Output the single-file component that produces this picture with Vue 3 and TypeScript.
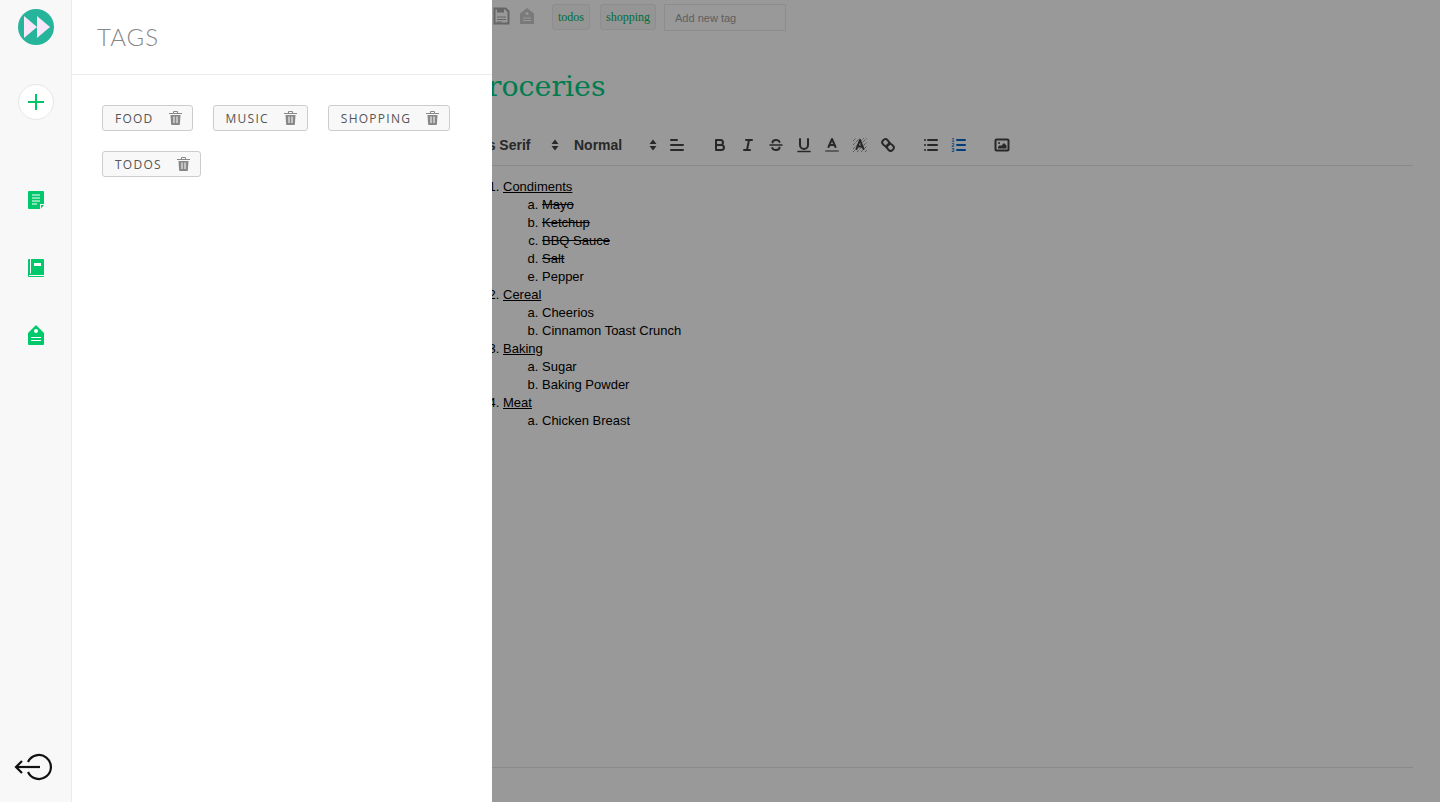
<script setup lang="ts">
interface Tag {
  name: string;
}

interface Item {
  text: string;
  done?: boolean;
}

interface Section {
  title: string;
  items: Item[];
}

const tags: Tag[] = [
  { name: 'Food' },
  { name: 'Music' },
  { name: 'Shopping' },
  { name: 'Todos' },
];

const sections: Section[] = [
  {
    title: 'Condiments',
    items: [
      { text: 'Mayo', done: true },
      { text: 'Ketchup', done: true },
      { text: 'BBQ Sauce', done: true },
      { text: 'Salt', done: true },
      { text: 'Pepper' },
    ],
  },
  {
    title: 'Cereal',
    items: [{ text: 'Cheerios' }, { text: 'Cinnamon Toast Crunch' }],
  },
  {
    title: 'Baking',
    items: [{ text: 'Sugar' }, { text: 'Baking Powder' }],
  },
  {
    title: 'Meat',
    items: [{ text: 'Chicken Breast' }],
  },
];
</script>

<template>
  <div class="page">
    <main class="editor">
      <div class="note-bar">
        <svg class="note-icon" viewBox="0 0 17 18">
          <path d="M1.500 1.500h11l3 3v12h-14z" fill="#fff" stroke="#aaa" stroke-width="2" />
          <rect x="4" y="1" width="7" height="4.500" fill="#aaa" />
          <path d="M4 10h9M4 12.500h9M4 15h5" stroke="#aaa" stroke-width="1" />
        </svg>
        <svg class="note-icon note-icon--tag" viewBox="0 0 14 18">
          <path d="M0 6.500L7 1l7 5.500V17H0z" fill="#ccc" />
          <circle cx="7" cy="6.500" r="1.500" fill="#fff" />
          <path d="M3 11h8M3 13.500h8" stroke="#fff" stroke-width="1" />
        </svg>
        <span class="note-tag">todos</span>
        <span class="note-tag">shopping</span>
        <input class="note-input" type="text" placeholder="Add new tag" />
      </div>

      <h1 class="note-title">Groceries</h1>

      <div class="toolbar">
        <div class="picker picker--font">
          Sans Serif
          <svg class="arrows" viewBox="0 0 8 12"><path d="M4 0.500l3.500 4.500H.5zM4 11.500L.5 7h7z" /></svg>
        </div>
        <div class="picker picker--size">
          Normal
          <svg class="arrows" viewBox="0 0 8 12"><path d="M4 0.500l3.500 4.500H.5zM4 11.500L.5 7h7z" /></svg>
        </div>
        <div class="tool-group tool-group--align">
          <svg class="tool" viewBox="0 0 18 18"><path d="M3 9h12M3 14h12M3 4h6" /></svg>
        </div>
        <div class="tool-group">
          <svg class="tool tool--bold" viewBox="0 0 18 18">
            <path d="M5 4h4.500a2.500 2.500 0 0 1 0 5H5zM5 9h5.500a2.500 2.500 0 0 1 0 5H5z" />
          </svg>
          <svg class="tool" viewBox="0 0 18 18"><path d="M7 4h6M5 14h6M8 14l2-10" /></svg>
          <svg class="tool" viewBox="0 0 18 18">
            <path class="tool-thin" d="M3 9h12" />
            <path d="M12.500 6C12 4.500 10.500 4 9 4 7 4 5.500 5 5.500 6.500M12.500 11.600C12.500 13 11 14 9 14c-1.700 0-3.200-.6-3.700-2" />
          </svg>
          <svg class="tool" viewBox="0 0 18 18">
            <path d="M5 3v6a4 4 0 0 0 8 0V3" />
            <path class="tool-thin" d="M3 15.500h12" />
          </svg>
          <svg class="tool" viewBox="0 0 18 18">
            <path class="tool-label" d="M3 15h12" />
            <path d="M5.500 11L9 3l3.500 8M6.400 9h5.200" />
          </svg>
          <svg class="tool" viewBox="0 0 18 18">
            <path class="tool-hatch" d="M2 5l3-3M2 9l7-7M2 13L13 2M2 16L16 2M6 16L16 6M10 16l6-6M14 16l2-2" />
            <path d="M5.500 13L9 4l3.500 9M6.400 10.500h5.200" />
          </svg>
          <svg class="tool" viewBox="0 0 18 18">
            <path d="M7 11l4-4" />
            <path d="M8.900 4.600a3.500 3.500 0 0 1 .4 4.700 3.500 3.500 0 0 1-4.700-.4C3.200 7.500 2 6.400 4.200 4.200s3.300-1 4.700.4z" />
            <path d="M13.400 9.100a3.500 3.500 0 0 0-4.700-.4 3.500 3.500 0 0 0 .4 4.700c1.400 1.400 2.500 2.600 4.700.4s1-3.300-.4-4.700z" />
          </svg>
        </div>
        <div class="tool-group">
          <svg class="tool" viewBox="0 0 18 18">
            <path d="M6 4h9M6 9h9M6 14h9" />
            <path d="M3 4h.01M3 9h.01M3 14h.01" />
          </svg>
          <svg class="tool tool--active" viewBox="0 0 18 18">
            <path d="M7 4h8M7 9h8M7 14h8" />
            <text x="1.500" y="6" class="tool-digit">1</text>
            <text x="1.500" y="11" class="tool-digit">2</text>
            <text x="1.500" y="16" class="tool-digit">3</text>
          </svg>
        </div>
        <div class="tool-group">
          <svg class="tool" viewBox="0 0 18 18">
            <rect x="2.500" y="3.500" width="13" height="11" rx="1" />
            <circle class="tool-fill" cx="6" cy="7" r="1" />
            <path class="tool-fill" d="M5 12.500V11l2-2 1 1 3-3 2.500 2.500v3z" />
          </svg>
        </div>
      </div>

      <div class="content">
        <ol class="outer">
          <li v-for="section in sections" :key="section.title">
            <u>{{ section.title }}</u>
            <ol class="inner">
              <li v-for="item in section.items" :key="item.text">
                <s v-if="item.done">{{ item.text }}</s>
                <template v-else>{{ item.text }}</template>
              </li>
            </ol>
          </li>
        </ol>
      </div>
    </main>

    <div class="scrim"></div>

    <div class="drawer">
      <nav class="sidebar">
        <svg class="logo" viewBox="0 0 36 36">
          <circle cx="18" cy="18" r="18" fill="#26b49b" />
          <path d="M6 7l13 11L6 29z" fill="#f9e6fb" />
          <path d="M19 7l13 11-13 11z" fill="#f9e6fb" />
        </svg>
        <button class="add-button" type="button" aria-label="Add note">
          <svg viewBox="0 0 18 18" width="18" height="18">
            <path d="M9 1v16M1 9h16" stroke="#00c566" stroke-width="2" />
          </svg>
        </button>
        <svg class="nav-icon nav-icon--notes" viewBox="0 0 16 18">
          <path d="M0 1a1 1 0 0 1 1-1h14a1 1 0 0 1 1 1v12h-4v5H1a1 1 0 0 1-1-1z" fill="#00c96b" />
          <path d="M13 14h3l-3 3.500z" fill="#00c96b" />
          <path d="M4 4h8M4 7h8M4 10h8M4 13h5" stroke="#fff" stroke-width="1" />
        </svg>
        <svg class="nav-icon nav-icon--book" viewBox="0 0 16 18">
          <path d="M1 0h14a1 1 0 0 1 1 1v16a1 1 0 0 1-1 1H1a1 1 0 0 1-1-1V1a1 1 0 0 1 1-1z" fill="#00c96b" />
          <path d="M2.500 0v14.500" stroke="#fff" stroke-width="1" />
          <path d="M1 16.500h15" stroke="#fff" stroke-width="1" />
          <rect x="6" y="4" width="7" height="3" fill="#fff" />
        </svg>
        <svg class="nav-icon nav-icon--tag" viewBox="0 0 16 20">
          <path d="M0 8l8-8 8 8v11a1 1 0 0 1-1 1H1a1 1 0 0 1-1-1z" fill="#00c96b" />
          <circle cx="8" cy="6" r="2" fill="#fff" />
          <path d="M3 12.500h10M3 15.500h10" stroke="#fff" stroke-width="1" />
        </svg>
        <svg class="logout" viewBox="0 0 38 28">
          <path d="M14 9A12 12 0 1 1 14 19" fill="none" stroke="#111" stroke-width="2.200" />
          <path d="M2 14h24" stroke="#111" stroke-width="2.200" />
          <path d="M8 8l-6 6 6 6" fill="none" stroke="#111" stroke-width="2.200" />
        </svg>
      </nav>

      <section class="panel">
        <header class="panel-head">
          <h2 class="panel-title">TAGS</h2>
        </header>
        <div class="tag-list">
          <div v-for="tag in tags" :key="tag.name" class="tag">
            <span class="tag-name">{{ tag.name }}</span>
            <svg class="trash" viewBox="0 0 13 14">
              <path d="M4.500 2V.5h4V2M0 2.500h13" fill="none" stroke="#888" stroke-width="1" />
              <path d="M1.500 4h10l-.6 9.200a.8.8 0 0 1-.8.8H2.900a.8.8 0 0 1-.8-.8z" fill="#888" />
              <path d="M5 5.500V12M8 5.500V12" stroke="#fff" stroke-width="1" />
            </svg>
          </div>
        </div>
      </section>
    </div>
  </div>
</template>

<style>
html,
body {
  margin: 0;
  height: 100%;
  overflow: hidden;
  background: #fff;
}
</style>

<style scoped>
.page {
  position: relative;
  height: 802px;
  overflow: hidden;
  background: #fff;
  font-family: "Liberation Sans", Arial, sans-serif;
}

.editor {
  display: flex;
  flex-direction: column;
  height: 802px;
  box-sizing: border-box;
  padding: 4px 27px 34px 454px;
}

.note-bar {
  display: flex;
  align-items: flex-start;
  height: 26px;
  padding-left: 39px;
}

.note-icon {
  width: 17px;
  height: 18px;
  margin-top: 3px;
}

.note-icon--tag {
  width: 14px;
  margin-left: 10px;
}

.note-tag {
  box-sizing: border-box;
  height: 26px;
  margin-right: 10px;
  padding: 0 5px;
  border: 1px solid #ebebeb;
  border-radius: 3px;
  background: #f8f8f8;
  color: #00b765;
  font-family: "Liberation Serif", serif;
  font-size: 12px;
  line-height: 24px;
}

.note-icon--tag + .note-tag {
  margin-left: 18px;
}

.note-input {
  box-sizing: border-box;
  width: 122px;
  height: 27px;
  margin: 0 0 0 -2px;
  padding: 0 10px;
  border: 1px solid #ebebeb;
  background: transparent;
  font-family: "Liberation Sans", Arial, sans-serif;
  font-size: 11px;
  outline: none;
}

.note-input::placeholder {
  color: #a0a0a0;
}

.note-title {
  margin: 36px 0 0 11px;
  color: #00d084;
  font-family: "DejaVu Serif", serif;
  font-size: 28.5px;
  font-weight: 400;
  line-height: 42px;
}

.toolbar {
  display: flex;
  align-items: center;
  height: 41px;
  margin-top: 16px;
  border-bottom: 1px solid #e4e4e4;
  color: #444;
}

.picker {
  display: flex;
  align-items: center;
  justify-content: space-between;
  box-sizing: border-box;
  padding: 0 3px 0 8px;
  font-size: 14px;
  font-weight: 700;
}

.picker--font {
  width: 108px;
  margin-right: 4px;
}

.picker--size {
  width: 95px;
  padding-right: 4px;
}

.arrows {
  width: 8px;
  height: 12px;
  fill: #444;
}

.tool-group {
  display: flex;
  margin-left: 15px;
}

.tool-group--align {
  margin-left: 2px;
}

.tool {
  box-sizing: border-box;
  width: 28px;
  height: 24px;
  padding: 3px 5px;
  fill: none;
  stroke: #444;
  stroke-width: 2;
  stroke-linecap: round;
  stroke-linejoin: round;
}

.tool-thin {
  stroke-width: 1.500;
}

.tool-label {
  stroke: #999;
}

.tool-hatch {
  stroke-width: 0.8;
  stroke-dasharray: 1 1;
  stroke-linecap: butt;
}

.tool-fill {
  fill: #444;
  stroke: none;
}

.tool--active {
  stroke: #06c;
}

.tool-digit {
  fill: #06c;
  stroke: none;
  font-family: "Liberation Sans", Arial, sans-serif;
  font-size: 5px;
  font-weight: 700;
}

.content {
  flex: 1;
  padding-top: 12px;
  border-bottom: 1px solid #e4e4e4;
  color: #000;
  font-size: 13px;
  line-height: 18px;
}

.outer {
  margin: 0;
  padding-left: 49px;
  list-style-type: decimal;
}

.inner {
  margin: 0;
  padding-left: 39px;
  list-style-type: lower-alpha;
}

.scrim {
  position: absolute;
  inset: 0;
  background: rgba(0, 0, 0, 0.4);
}

.drawer {
  position: absolute;
  top: 0;
  left: 0;
  bottom: 0;
  display: flex;
  width: 492px;
  background: #fff;
}

.sidebar {
  display: flex;
  flex-direction: column;
  align-items: center;
  box-sizing: border-box;
  width: 72px;
  border-right: 1px solid #ebebeb;
  background: #f8f8f8;
}

.logo {
  width: 36px;
  height: 36px;
  margin-top: 9px;
}

.add-button {
  display: flex;
  align-items: center;
  justify-content: center;
  box-sizing: border-box;
  width: 36px;
  height: 36px;
  margin-top: 39px;
  padding: 0;
  border: 1px solid #e6e6e6;
  border-radius: 50%;
  background: #fff;
}

.nav-icon {
  width: 16px;
  height: 18px;
}

.nav-icon--notes {
  margin-top: 71px;
}

.nav-icon--book {
  margin-top: 50px;
}

.nav-icon--tag {
  height: 20px;
  margin-top: 48px;
}

.logout {
  width: 38px;
  height: 28px;
  margin-top: auto;
  margin-bottom: 21px;
  margin-right: 5px;
}

.panel {
  flex: 1;
}

.panel-head {
  box-sizing: border-box;
  height: 75px;
  padding: 22px 25px 0;
  border-bottom: 1px solid #ebebeb;
}

.panel-title {
  margin: 0;
  color: #888;
  font-family: Lato, sans-serif;
  font-size: 24px;
  font-weight: 300;
  letter-spacing: 1px;
  line-height: 30px;
}

.tag-list {
  display: flex;
  flex-wrap: wrap;
  gap: 20px;
  padding: 30px;
}

.tag {
  display: flex;
  align-items: center;
  box-sizing: border-box;
  height: 26px;
  padding: 0 10px 0 12px;
  border: 1px solid #ccc;
  border-radius: 3px;
  background: #f8f8f8;
}

.tag-name {
  color: #555;
  font-family: "Open Sans", sans-serif;
  font-size: 12px;
  letter-spacing: 1.25px;
  text-transform: uppercase;
}

.trash {
  width: 13px;
  height: 14px;
  margin-left: 15px;
}
</style>
